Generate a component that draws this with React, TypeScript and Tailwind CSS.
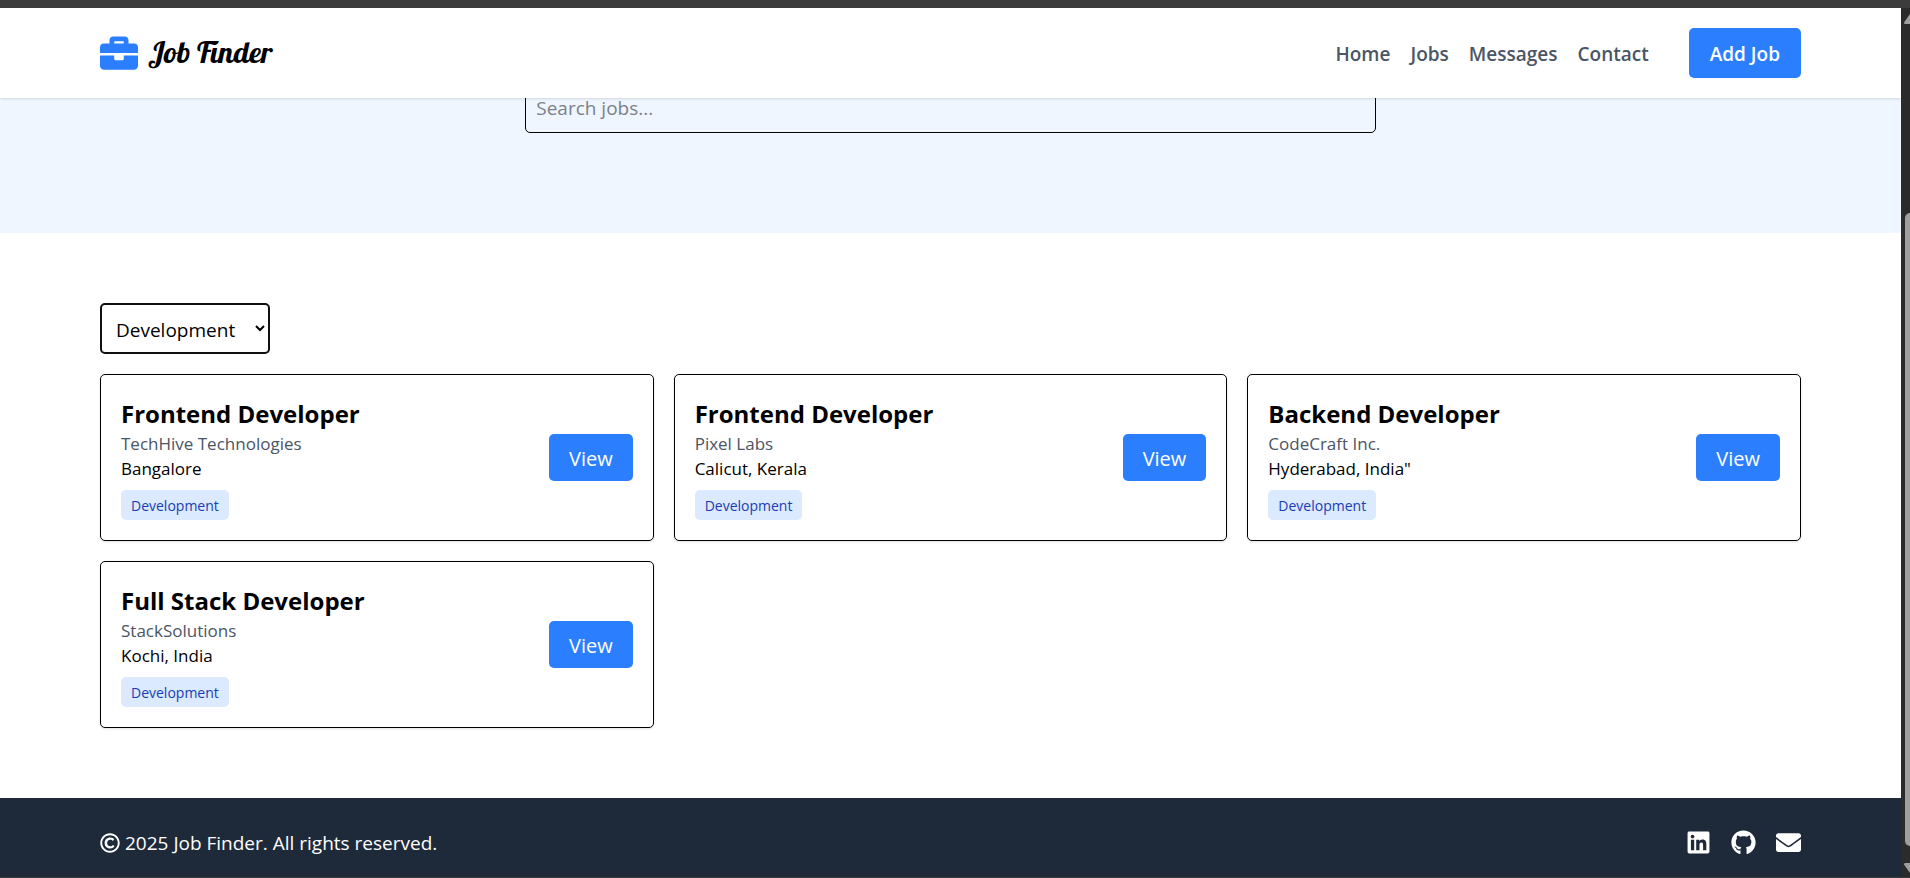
import { FaBriefcase, FaEnvelope, FaGithub, FaLinkedin, FaRegCopyright } from "react-icons/fa";

type Job = { title: string; company: string; location: string; category: string };

const jobs: Job[] = [
  { title: "Frontend Developer", company: "TechHive Technologies", location: "Bangalore", category: "Development" },
  { title: "Frontend Developer", company: "Pixel Labs", location: "Calicut, Kerala", category: "Development" },
  { title: "Backend Developer", company: "CodeCraft Inc.", location: 'Hyderabad, India"', category: "Development" },
  { title: "Full Stack Developer", company: "StackSolutions", location: "Kochi, India", category: "Development" },
];

const links = ["Home", "Jobs", "Messages", "Contact"];

function Header() {
  return (
    <header className="relative z-10 flex h-[90px] items-center justify-between bg-white px-[100px] shadow-sm">
      <a href="#home" className="flex items-center gap-[10px]">
        <FaBriefcase size={38} className="text-[#2b7fff]" />
        <span className="pb-[2px] font-['Lobster','Liberation_Serif',serif] text-[30px] leading-[40px] text-black">
          Job Finder
        </span>
      </a>
      <div className="flex items-center gap-[40px]">
        <nav className="flex gap-[20px] pt-[2px] text-[19px] font-semibold text-[#4a5565]">
          {links.map((link) => (
            <a key={link} href={`#${link.toLowerCase()}`}>
              {link}
            </a>
          ))}
        </nav>
        <button type="button" className="h-[50px] rounded-[5px] bg-[#2b7fff] px-[21px] pt-[2px] text-[19px] font-semibold text-white">
          Add Job
        </button>
      </div>
    </header>
  );
}

function JobCard({ job }: { job: Job }) {
  return (
    <article className="flex items-center justify-between rounded-[5px] border border-black p-[20px] shadow-sm">
      <div>
        <h2 className="pt-[1px] text-[24px] leading-[35px] font-bold">{job.title}</h2>
        <p className="text-[17px] leading-[25px] text-[#4a5565]">{job.company}</p>
        <p className="text-[17px] leading-[25px]">{job.location}</p>
        <span className="mt-[9px] block w-fit rounded-[5px] bg-[#dbeafe] px-[10px] pt-[6px] pb-[4px] text-[14px] leading-[20px] text-[#193cb8]">
          {job.category}
        </span>
      </div>
      <button type="button" className="h-[47px] rounded-[5px] bg-[#2b7fff] px-[20px] pt-[2px] text-[20px] text-white">
        View
      </button>
    </article>
  );
}

function Footer() {
  return (
    <footer className="flex items-center justify-between bg-[#1e2939] px-[100px] pt-[32px] pb-[22px] text-white">
      <p className="flex items-center gap-[5px] text-[19px] leading-[25px]">
        <FaRegCopyright size={20} />
        <span className="pt-[2px] leading-[23px]">2025 Job Finder. All rights reserved.</span>
      </p>
      <div className="flex gap-[20px]">
        <a href="#linkedin" aria-label="LinkedIn">
          <FaLinkedin size={25} />
        </a>
        <a href="#github" aria-label="GitHub">
          <FaGithub size={25} />
        </a>
        <a href="#email" aria-label="Email">
          <FaEnvelope size={25} />
        </a>
      </div>
    </footer>
  );
}

function ScrollTrack() {
  return (
    <div className="flex w-[9px] shrink-0 flex-col overflow-hidden bg-[#2b2b2b] pt-[6px] pb-[4px] pl-[3px]" aria-hidden="true">
      <svg width="12" height="10" viewBox="0 0 12 10" className="shrink-0 fill-[#9f9f9f]">
        <path d="M6 0 12 8.5Q12 10 11 10H1Q0 10 0 8.5Z" />
      </svg>
      <div className="mt-[189px] mb-[17px] ml-px w-[10px] grow rounded-[5px] bg-[#9f9f9f]" />
      <svg width="12" height="10" viewBox="0 0 12 10" className="shrink-0 fill-[#9f9f9f]">
        <path d="M6 10 12 1.5Q12 0 11 0H1Q0 0 0 1.5Z" />
      </svg>
    </div>
  );
}

export default function App() {
  return (
    <div className="overflow-hidden border-t-8 border-b border-[#3c3c3c] bg-white font-['Open_Sans','Noto_Sans',sans-serif] text-black">
      <div className="flex">
        <div className="min-w-0 grow">
          <Header />
          <section className="-mt-[15px] flex justify-center bg-[#eff6ff] px-[100px] pb-[100px]">
            <input
              type="text"
              aria-label="Search jobs"
              placeholder="Search jobs..."
              className="h-[50px] w-1/2 rounded-[5px] border border-black px-[10px] text-[19px] placeholder:text-[#7c8188]"
            />
          </section>
          <main className="px-[100px] py-[70px]">
            <select
              aria-label="Category"
              defaultValue="Development"
              className="block h-[51px] w-[170px] rounded-[5px] border-2 border-[#101010] bg-white px-[10px] pt-[2px] text-[19px]"
            >
              <option>Development</option>
              <option>Design</option>
              <option>Marketing</option>
            </select>
            <div className="mt-[20px] grid grid-cols-3 gap-[20px]">
              {jobs.map((job) => (
                <JobCard key={job.company} job={job} />
              ))}
            </div>
          </main>
          <Footer />
        </div>
        <ScrollTrack />
      </div>
    </div>
  );
}
